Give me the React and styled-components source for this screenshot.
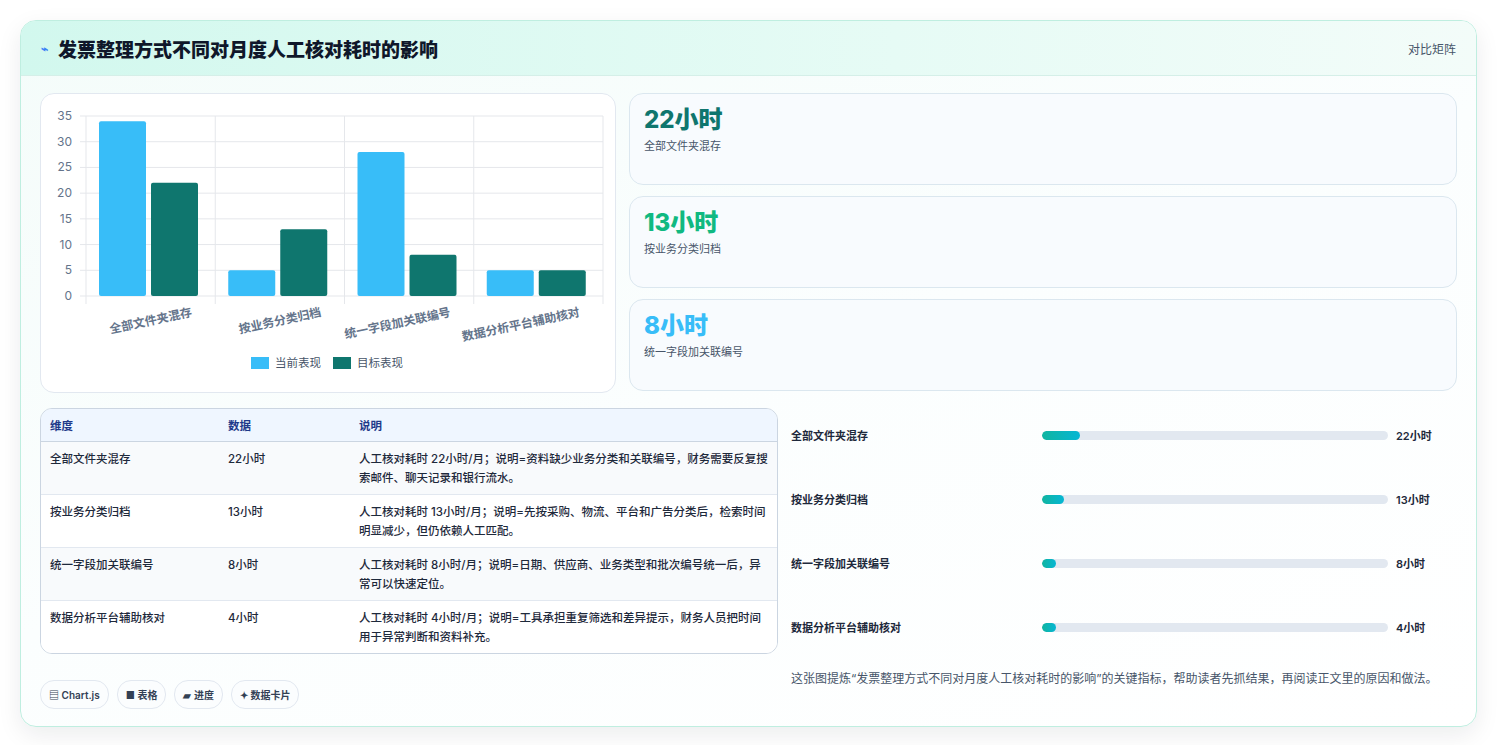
import React from "react";
import styled, { createGlobalStyle } from "styled-components";

const G = createGlobalStyle`
  body{margin:0;background:#fff;font-family:Inter,"Noto Sans CJK SC",sans-serif;color:#1e293b;}
`;
const Page = styled.div`padding:20px 21px 22px 20px;`;
const Card = styled.div`
  border:1px solid #bfeee0;border-radius:16px;overflow:hidden;
  background:linear-gradient(160deg,#f4fcfa 0%,#fbfefe 50%,#ffffff 100%);
  box-shadow:0 8px 24px rgba(15,23,42,0.08);
`;
const Header = styled.div`
  height:54px;display:flex;align-items:center;justify-content:space-between;
  padding:0 20px;background:linear-gradient(90deg,#d2f8ee,#e6fbf5 60%,#f3fcf9);
  border-bottom:1px solid #d5efe8;
`;
const Title = styled.h1`margin:0;font-size:19px;font-weight:800;color:#0f172a;display:flex;align-items:center;gap:10px;`;
const Tag = styled.span`font-size:12px;color:#475569;`;
const Body = styled.div`padding:17px 19px 17px 19px;display:flex;flex-direction:column;gap:15px;`;
const Row = styled.div`display:grid;grid-template-columns:576px 1fr;gap:13px;`;
const Panel = styled.div`background:#fff;border:1px solid #e2e8f0;border-radius:14px;height:298px;`;
const Stats = styled.div`display:flex;flex-direction:column;gap:11px;`;
const Stat = styled.div`height:92px;box-sizing:border-box;border:1px solid #dbe7ef;border-radius:14px;background:#f8fbfe;padding:10px 14px;`;
const StatVal = styled.div`font-size:24px;font-weight:800;color:${p=>p.c};line-height:32px;`;
const StatLabel = styled.div`font-size:11px;color:#475569;margin-top:1px;`;
const Bottom = styled.div`display:grid;grid-template-columns:738px 1fr;gap:13px;`;
const Left = styled.div`display:flex;flex-direction:column;gap:26px;`;
const Table = styled.table`width:100%;border-collapse:separate;border-spacing:0;border:1px solid #cbd5e1;border-radius:12px;overflow:hidden;font-size:11.5px;`;
const Th = styled.th`text-align:left;font-weight:600;color:#1e3a8a;background:#eff6ff;padding:8px 9px;height:16px;border-bottom:1px solid #cbd5e1;`;
const Td = styled.td`padding:8px 9px 0;height:44px;vertical-align:top;line-height:19px;color:#1e293b;font-weight:500;background:${p=>p.alt?"#f8fafc":"#fff"};border-bottom:${p=>p.last?"none":"1px solid #e2e8f0"};`;
const Chips = styled.div`display:flex;gap:8px;`;
const Chip = styled.span`font-size:10px;font-weight:600;color:#334155;border:1px solid #e2e8f0;border-radius:14px;padding:6px 8px;background:#fbfdfe;`;
const Right = styled.div`display:flex;flex-direction:column;gap:10px;`;
const PRow = styled.div`height:54px;display:grid;grid-template-columns:251px 346px 1fr;align-items:center;font-size:11px;font-weight:600;color:#1e293b;`;
const Val = styled.span`margin-left:8px;white-space:nowrap;`;
const Track = styled.div`height:9px;border-radius:5px;background:#e2e8f0;overflow:hidden;`;
const Fill = styled.div`height:100%;border-radius:5px;background:linear-gradient(90deg,#10b5a0,#06b6d4);min-width:14px;`;
const Note = styled.p`margin:4px 0 0;font-size:12px;line-height:21px;color:#475569;`;

const labels=["全部文件夹混存","按业务分类归档","统一字段加关联编号","数据分析平台辅助核对"];
const cur=[34,5,28,5], tgt=[22,13,8,5];

function Chart(){
  const x0=45,x1=562,y0=202,h=180,step=(x1-x0)/4;
  const y=v=>y0-v/35*h;
  return (
    <svg width="576" height="298" style={{display:"block"}}>
      {[0,5,10,15,20,25,30,35].map(v=>(
        <g key={v}>
          <line x1={x0-6} x2={x1} y1={y(v)} y2={y(v)} stroke="#e5e7eb"/>
          <text x={x0-14} y={y(v)+4} fontSize="12" fill="#64748b" textAnchor="end" fontFamily="Inter,sans-serif">{v}</text>
        </g>))}
      {[0,1,2,3,4].map(i=><line key={i} x1={x0+i*step} x2={x0+i*step} y1={y(35)} y2={y0+8} stroke="#e5e7eb"/>)}
      {labels.map((l,i)=>{
        const gx=x0+i*step;
        return <g key={i}>
          <rect x={gx+13} y={y(cur[i])} width={47} height={y0-y(cur[i])} rx="2" fill="#38bdf8"/>
          <rect x={gx+65} y={y(tgt[i])} width={47} height={y0-y(tgt[i])} rx="2" fill="#0f766e"/>
          <text transform={`translate(${gx+step/2+42},${y0+20}) rotate(-12)`} fontSize="12" fontWeight="600" fill="#64748b" textAnchor="end" fontFamily="'Noto Sans CJK SC',sans-serif">{l}</text>
        </g>;})}
      <rect x="210" y="263" width="18" height="12" fill="#38bdf8"/>
      <text x="234" y="273" fontSize="11.5" fill="#475569" fontFamily="'Noto Sans CJK SC',sans-serif">当前表现</text>
      <rect x="292" y="263" width="18" height="12" fill="#0f766e"/>
      <text x="316" y="273" fontSize="11.5" fill="#475569" fontFamily="'Noto Sans CJK SC',sans-serif">目标表现</text>
    </svg>
  );
}

const rows=[
  ["全部文件夹混存","22小时","人工核对耗时 22小时/月；说明=资料缺少业务分类和关联编号，财务需要反复搜索邮件、聊天记录和银行流水。",11],
  ["按业务分类归档","13小时","人工核对耗时 13小时/月；说明=先按采购、物流、平台和广告分类后，检索时间明显减少，但仍依赖人工匹配。",6.5],
  ["统一字段加关联编号","8小时","人工核对耗时 8小时/月；说明=日期、供应商、业务类型和批次编号统一后，异常可以快速定位。",4],
  ["数据分析平台辅助核对","4小时","人工核对耗时 4小时/月；说明=工具承担重复筛选和差异提示，财务人员把时间用于异常判断和资料补充。",2],
];

export default function App(){
  return (<>
    <G/>
    <Page><Card>
      <Header>
        <Title><span style={{color:"#3b82f6",fontSize:12}}>⌁</span>发票整理方式不同对月度人工核对耗时的影响</Title>
        <Tag>对比矩阵</Tag>
      </Header>
      <Body>
        <Row>
          <Panel><Chart/></Panel>
          <Stats>
            <Stat><StatVal c="#0f766e">22小时</StatVal><StatLabel>全部文件夹混存</StatLabel></Stat>
            <Stat><StatVal c="#10b981">13小时</StatVal><StatLabel>按业务分类归档</StatLabel></Stat>
            <Stat><StatVal c="#38bdf8">8小时</StatVal><StatLabel>统一字段加关联编号</StatLabel></Stat>
          </Stats>
        </Row>
        <Bottom>
          <Left>
            <Table>
              <thead><tr><Th style={{width:160}}>维度</Th><Th style={{width:113}}>数据</Th><Th>说明</Th></tr></thead>
              <tbody>{rows.map((r,i)=>(
                <tr key={i}>
                  <Td alt={i%2===0} last={i===3}>{r[0]}</Td>
                  <Td alt={i%2===0} last={i===3}>{r[1]}</Td>
                  <Td alt={i%2===0} last={i===3}>{r[2]}</Td>
                </tr>))}</tbody>
            </Table>
            <Chips><Chip>▤ Chart.js</Chip><Chip>■ 表格</Chip><Chip>▰ 进度</Chip><Chip>✦ 数据卡片</Chip></Chips>
          </Left>
          <Right>
            {rows.map((r,i)=>(
              <PRow key={i}><span>{r[0]}</span><Track><Fill style={{width:r[3]+"%"}}/></Track><Val>{r[1]}</Val></PRow>
            ))}
            <Note>这张图提炼“发票整理方式不同对月度人工核对耗时的影响”的关键指标，帮助读者先抓结果，再阅读正文里的原因和做法。</Note>
          </Right>
        </Bottom>
      </Body>
    </Card></Page>
  </>);
}
